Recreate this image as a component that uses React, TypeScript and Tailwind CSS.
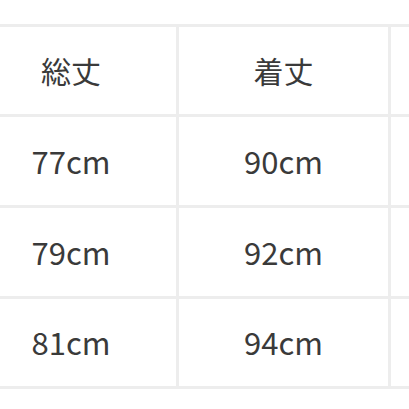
const header = ['総丈', '着丈', '']
const rows = [
  ['77cm', '90cm', ''],
  ['79cm', '92cm', ''],
  ['81cm', '94cm', ''],
]

function Cell({ children, head }: { children?: string; head?: boolean }) {
  return (
    <div
      className={`flex items-center justify-center bg-white text-[#3a3a3a] ${
        head ? 'text-[30px]' : 'text-[31px]'
      }`}
    >
      {children}
    </div>
  )
}

export default function App() {
  return (
    <div
      className="w-[409px] h-[409px] overflow-hidden bg-white pt-[24px]"
      style={{ fontFamily: '"Noto Sans CJK JP", "Noto Sans", sans-serif' }}
    >
      <div className="ml-[-37px] w-max grid grid-cols-[210px_209px_210px] grid-rows-[87px_88px_88px_87px] gap-[3px] border-[3px] border-[#ededed] bg-[#ededed]">
        {header.map((h, i) => (
          <Cell key={`h${i}`} head>
            {h}
          </Cell>
        ))}
        {rows.map((r, ri) =>
          r.map((c, ci) => <Cell key={`${ri}-${ci}`}>{c}</Cell>)
        )}
      </div>
    </div>
  )
}
